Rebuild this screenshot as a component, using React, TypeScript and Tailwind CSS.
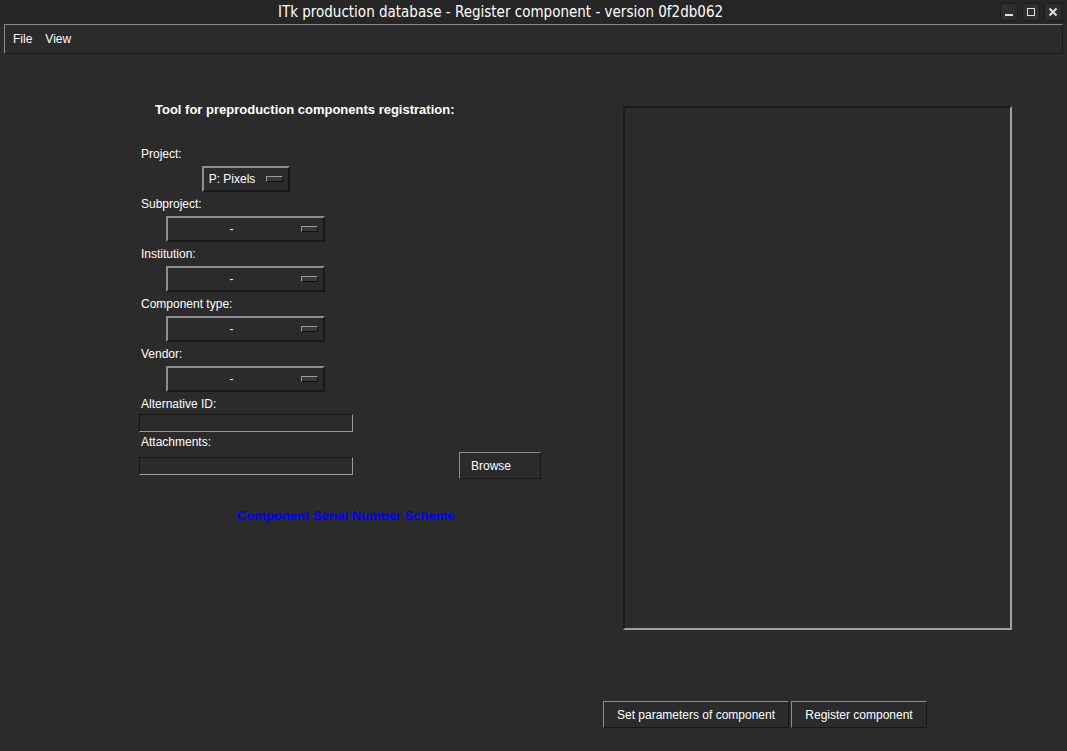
const sans = "font-['Liberation_Sans',Arial,sans-serif]";

function Dropdown({ value, width, ml }: { value: string; width: string; ml: string }) {
  return (
    <div
      className={`${width} ${ml} mt-[2px] h-[26px] flex items-center border-2 border-t-[#8e8e8e] border-l-[#8e8e8e] border-b-[#181818] border-r-[#181818] bg-[#2b2b2b] pr-[5px]`}
    >
      <span className="flex-1 text-center text-[12px] text-white pr-[6px]">{value}</span>
      <span className="w-[17px] h-[6px] border border-t-[#9a9a9a] border-l-[#9a9a9a] border-b-[#111] border-r-[#111] bg-[#3a3a3a]" />
    </div>
  );
}

function Label({ text }: { text: string }) {
  return <div className="h-[20px] leading-[20px] text-[12px] text-white pl-[2px]">{text}</div>;
}

function Entry({ mt }: { mt: string }) {
  return (
    <div className={`${mt} w-[214px] h-[18px] shrink-0 border border-t-[#161616] border-l-[#161616] border-b-[#9a9a9a] border-r-[#9a9a9a] bg-[#2b2b2b]`} />
  );
}

function RaisedButton({ children, className }: { children: React.ReactNode; className: string }) {
  return (
    <div
      className={`${className} h-[27px] shrink-0 flex items-center border border-t-[#8e8e8e] border-l-[#8e8e8e] border-b-[#181818] border-r-[#181818] bg-[#2b2b2b] text-[12px] text-white`}
    >
      {children}
    </div>
  );
}

export default function App() {
  return (
    <div className={`w-[1067px] h-[751px] bg-[#2b2b2b] flex flex-col overflow-hidden ${sans}`}>
      {/* window title bar */}
      <div className="h-[24px] bg-[#262626] flex items-center relative">
        <div className="flex-1 pr-[66px] text-center text-[15px] text-white font-['DejaVu_Sans_Condensed','Liberation_Sans',sans-serif]">
          ITk production database - Register component - version 0f2db062
        </div>
        <div className="absolute right-[5px] top-[3px] flex gap-[4px]">
          <div className="w-[18px] h-[18px] rounded-[3px] bg-[#2e2e2e] border border-[#1c1c1c] flex items-end justify-center pb-[4px]">
            <span className="w-[8px] h-[2px] bg-[#e0e0e0]" />
          </div>
          <div className="w-[18px] h-[18px] rounded-[3px] bg-[#2e2e2e] border border-[#1c1c1c] flex items-center justify-center">
            <span className="w-[8px] h-[8px] border-[1.5px] border-[#e0e0e0]" />
          </div>
          <div className="w-[18px] h-[18px] rounded-[3px] bg-[#2e2e2e] border border-[#1c1c1c] flex items-center justify-center">
            <svg width="10" height="10" viewBox="0 0 10 10">
              <path d="M1.5 1.5 L8.5 8.5 M8.5 1.5 L1.5 8.5" stroke="#e0e0e0" strokeWidth="2" />
            </svg>
          </div>
        </div>
      </div>

      {/* menu bar */}
      <div className="mx-[4px] h-[30px] flex items-center gap-[13px] px-[8px] border border-t-[#8a8a8a] border-l-[#8a8a8a] border-b-[#1a1a1a] border-r-[#1a1a1a] text-[12px] text-white">
        <span>File</span>
        <span>View</span>
      </div>

      {/* content */}
      <div className="flex-1 flex">
        <div className="w-[623px] shrink-0 pl-[139px] pt-[49px] flex flex-col">
          <div className="ml-[16px] h-[14px] leading-[14px] text-[13px] font-bold text-white">
            Tool for preproduction components registration:
          </div>
          <div className="mt-[27px]">
            <Label text="Project:" />
            <Dropdown value="P: Pixels" width="w-[88px]" ml="ml-[63px]" />
            <div className="mt-[2px]" />
            <Label text="Subproject:" />
            <Dropdown value="-" width="w-[159px]" ml="ml-[27px]" />
            <div className="mt-[2px]" />
            <Label text="Institution:" />
            <Dropdown value="-" width="w-[159px]" ml="ml-[27px]" />
            <div className="mt-[2px]" />
            <Label text="Component type:" />
            <Dropdown value="-" width="w-[159px]" ml="ml-[27px]" />
            <div className="mt-[2px]" />
            <Label text="Vendor:" />
            <Dropdown value="-" width="w-[159px]" ml="ml-[27px]" />
            <div className="mt-[2px]" />
            <Label text="Alternative ID:" />
            <Entry mt="mt-0" />
            <Label text="Attachments:" />
            <div className="flex items-start">
              <Entry mt="mt-[5px]" />
              <RaisedButton className="ml-[106px] w-[82px] pl-[11px]">Browse</RaisedButton>
            </div>
          </div>
          <div className="mt-[29px] ml-[98px] text-[13px] font-bold text-[#0000ff] leading-[16px]">
            Component Serial Number Scheme
          </div>
        </div>

        <div className="flex-1 flex flex-col items-start">
          <div className="mt-[52px] w-[389px] h-[524px] border-2 border-t-[#1c1c1c] border-l-[#1c1c1c] border-b-[#a0a0a0] border-r-[#a0a0a0] bg-[#2b2b2b]" />
          <div className="mt-[71px] ml-[-20px] flex gap-[2px]">
            <RaisedButton className="w-[186px] justify-center">Set parameters of component</RaisedButton>
            <RaisedButton className="w-[136px] justify-center">Register component</RaisedButton>
          </div>
        </div>
      </div>
    </div>
  );
}
